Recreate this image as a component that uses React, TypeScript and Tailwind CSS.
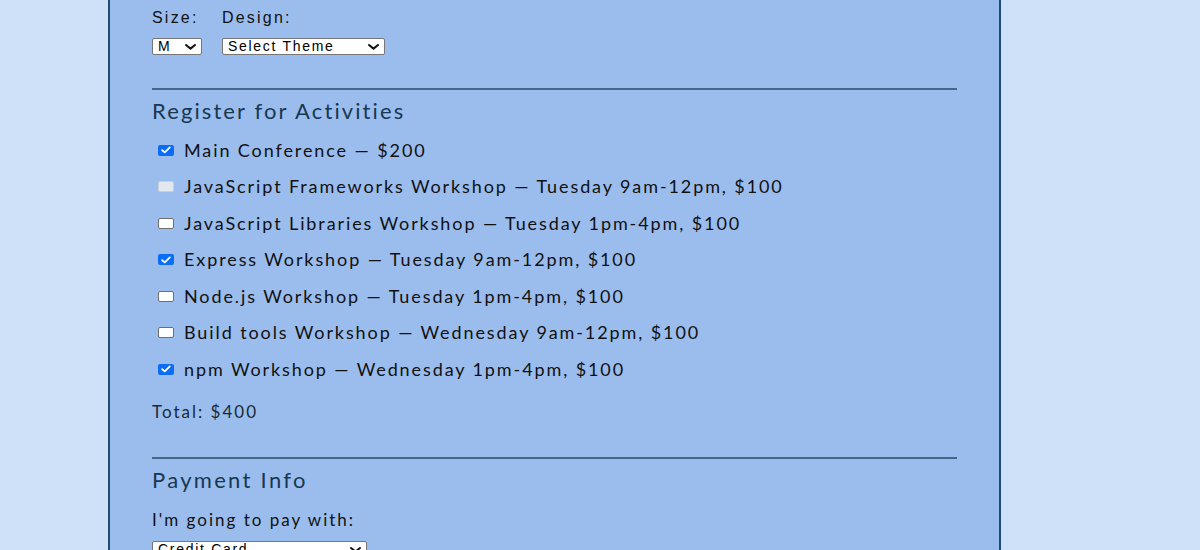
import React from 'react';

type Activity = {
  label: string;
  checked: boolean;
  disabled?: boolean;
};

const activities: Activity[] = [
  { label: 'Main Conference — $200', checked: true },
  { label: 'JavaScript Frameworks Workshop — Tuesday 9am-12pm, $100', checked: false, disabled: true },
  { label: 'JavaScript Libraries Workshop — Tuesday 1pm-4pm, $100', checked: false },
  { label: 'Express Workshop — Tuesday 9am-12pm, $100', checked: true },
  { label: 'Node.js Workshop — Tuesday 1pm-4pm, $100', checked: false },
  { label: 'Build tools Workshop — Wednesday 9am-12pm, $100', checked: false },
  { label: 'npm Workshop — Wednesday 1pm-4pm, $100', checked: true },
];

function Chevron() {
  return (
    <svg width="11" height="6" viewBox="0 0 11 6" className="pointer-events-none absolute right-[6px] top-[6px]">
      <path d="M1 1 L5.5 4.6 L10 1" fill="none" stroke="#111" strokeWidth="2" strokeLinecap="round" strokeLinejoin="round" />
    </svg>
  );
}

function Select({ value, width }: { value: string; width: string }) {
  return (
    <div className={`relative h-[17px] ${width}`}>
      <select
        defaultValue={value}
        className="block h-[17px] w-full appearance-none rounded-[2px] border border-[#767676] bg-white py-0 pl-[5px] text-[14px] leading-[15px] tracking-[1.7px] text-black outline-none"
        style={{ fontFamily: '"Liberation Sans", Arial, sans-serif' }}
      >
        <option>{value}</option>
      </select>
      <Chevron />
    </div>
  );
}

function Checkbox({ checked, disabled }: { checked: boolean; disabled?: boolean }) {
  if (checked) {
    return (
      <span className="flex h-[11px] w-[16px] items-center justify-center rounded-[2px] bg-[#0b6cf5]">
        <svg width="10" height="8" viewBox="0 0 10 8">
          <path d="M1.2 4.2 L3.8 6.4 L8.8 1.4" fill="none" stroke="#fff" strokeWidth="1.8" strokeLinecap="round" strokeLinejoin="round" />
        </svg>
      </span>
    );
  }
  return (
    <span
      className={`h-[11px] w-[16px] rounded-[2px] border ${
        disabled ? 'border-[#c9d0da] bg-[#e3e7ee]' : 'border-[#6f6f6f] bg-white'
      }`}
    />
  );
}

export default function App() {
  return (
    <div className="min-h-[550px] overflow-hidden bg-[#cfe1f8]" style={{ fontFamily: 'Lato, "Open Sans", sans-serif' }}>
      <div className="ml-[108px] h-[550px] w-[893px] overflow-hidden border-x-2 border-[#1f4d6e] bg-[#9bbdee] px-[42px]">
        <div
          className="flex h-[36px] items-center text-[16px] tracking-[2.2px] text-[#111]"
          style={{ fontFamily: '"Liberation Sans", Arial, sans-serif' }}
        >
          <span className="w-[70px]">Size:</span>
          <span>Design:</span>
        </div>
        <div className="mt-[2px] flex gap-[20px]">
          <Select value="M" width="w-[50px]" />
          <Select value="Select Theme" width="w-[163px]" />
        </div>

        <div className="mt-[33px] h-[2px] w-[805px] bg-[#3f6889]" />
        <h2 className="flex h-[40px] items-center text-[22px] tracking-[2.1px] text-[#17384f]">Register for Activities</h2>

        <div className="mt-[2px] flex flex-col">
          {activities.map((a) => (
            <label key={a.label} className="flex h-[36.5px] items-center text-[18px] tracking-[1.9px] text-[#111]">
              <span className="ml-[6px] mr-[10px] flex">
                <Checkbox checked={a.checked} disabled={a.disabled} />
              </span>
              <span>{a.label}</span>
            </label>
          ))}
        </div>

        <p className="flex h-[49px] items-center text-[17px] tracking-[2px] text-[#1b2a36]">Total: $400</p>

        <div className="mt-[20px] h-[2px] w-[805px] bg-[#3f6889]" />
        <h2 className="flex h-[41px] items-center text-[22px] tracking-[2.3px] text-[#17384f]">Payment Info</h2>
        <p className="flex h-[41px] items-center text-[17px] tracking-[2px] text-[#111]">I'm going to pay with:</p>
        <Select value="Credit Card" width="w-[215px]" />
      </div>
    </div>
  );
}
